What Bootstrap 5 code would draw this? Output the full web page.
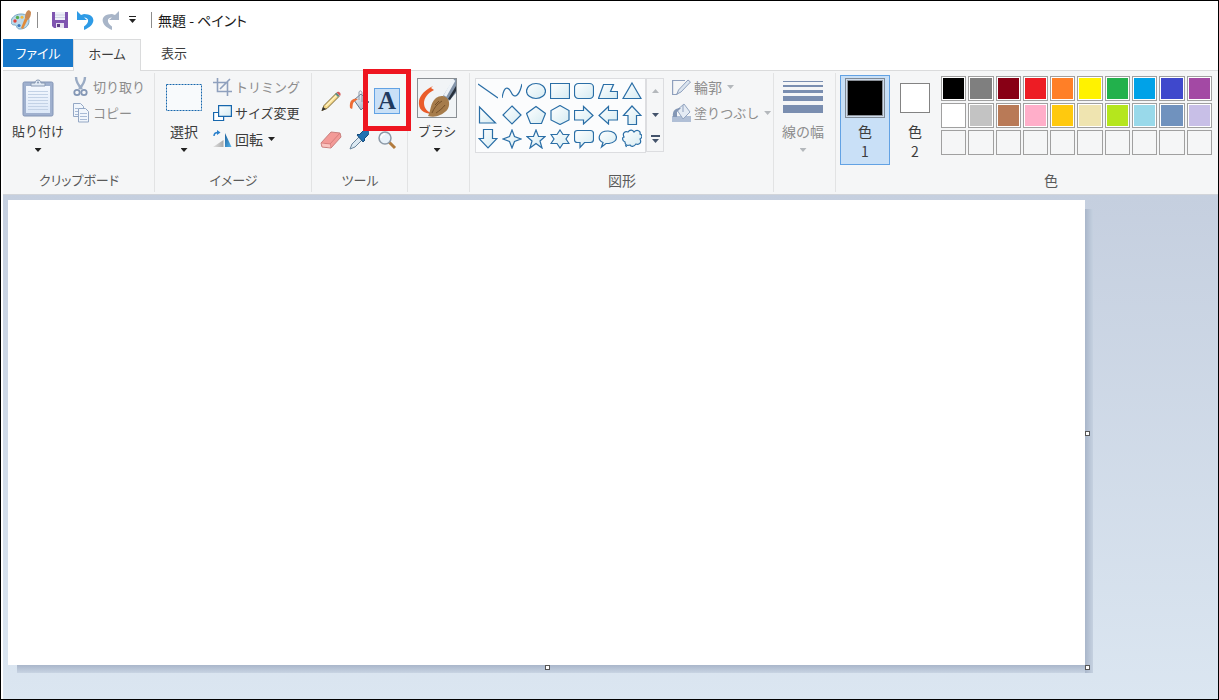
<!DOCTYPE html>
<html lang="ja">
<head>
<meta charset="utf-8">
<meta name="viewport" content="width=device-width, initial-scale=1">
<title>無題 - ペイント</title>
<link href="https://cdn.jsdelivr.net/npm/bootstrap@5.3.0/dist/css/bootstrap.min.css" rel="stylesheet">
<style>
  body { font-family: "Noto Sans CJK JP", sans-serif; font-size: 14px; line-height: 20px; font-feature-settings: "palt"; color: #3c3c3c; background: #fff; }
  svg { display: block; flex: none; }
  button { padding: 0; border: 0; background: none; color: inherit; white-space: nowrap; }
  .app-window { min-height: 100vh; border: 1px solid #000; padding-left: 2px; }
  .title-bar { height: 38px; padding: 0 8px; color: #1a1a1a; }
  .title-bar h1 { font-size: 14px; line-height: 20px; font-weight: 400; }
  .bar-line { width: 1px; height: 16px; background: #8c8c8c; margin: 0 6px 0 14px; }
  .bar-line.first { margin: 0 14px 0 6px; }
  .tab-strip { height: 31px; font-size: 13px; }
  .tab-strip a { display: block; height: 32px; padding-top: 4px; text-align: center; color: #3c3c3c; text-decoration: none; position: relative; }
  .tab-strip .tab-file { width: 70px; height: 28px; background: #1979ca; color: #fff; }
  .tab-strip .tab-home { width: 68px; background: #f5f6f7; border: 1px solid #dadbdc; border-bottom: 0; }
  .tab-strip .tab-view { width: 66px; }
  .ribbon { background: #f5f6f7; border-top: 1px solid #dadbdc; border-bottom: 1px solid #d2d5da; font-size: 13px; }
  .ribbon-group { position: relative; flex: none; display: flex; flex-direction: column; min-height: 123px; padding-top: 3px; }
  .ribbon-group:not(:last-child)::after { content: ""; position: absolute; right: 0; top: 2px; bottom: 2px; width: 1px; background: #e2e3e4; }
  .ribbon-group h2 { margin: auto 0 3px; font-size: 13px; line-height: 22px; font-weight: 400; text-align: center; color: #5a5a5a; }
  .ribbon .kanji { font-size: 14px; }
  .g-clip { width: 152px; } .g-image { width: 157px; } .g-tools { width: 96px; }
  .g-narrow { width: 62px; } .g-shapes { width: 304px; } .g-colors { flex: 1 0 382px; padding-top: 4px; }
  .g-clip > div { padding-left: 6px; }
  .g-colors h2 { padding-left: 48px; }
  .big-btn { display: flex; flex-direction: column; align-items: center; width: 58px; }
  .big-icon { display: flex; align-items: center; justify-content: center; height: 47px; }
  .big-caret { display: flex; align-items: center; height: 18px; }
  .row-btn { display: flex; align-items: center; height: 26px; gap: 3px; }
  .row-btn svg:first-child { width: 19px; }
  .dim { color: #8d8d8d; }
  .caret { width: 7px; height: 4px; background: currentColor; clip-path: polygon(0 0, 100% 0, 50% 100%); color: #222; }
  .row-btn .caret { margin-left: 2px; }
  .dim .caret { color: #b4b8bc; }
  .tool-grid { display: grid; grid-template-columns: repeat(3, 28px); grid-template-rows: 39px 39px; margin: 7px 0 0 5px; }
  .tool-grid button { display: flex; align-items: center; justify-content: center; }
  .text-tool { position: relative; }
  .text-tool > span { display: flex; align-items: center; justify-content: center; width: 26px; height: 26px; background: #c9e0f7; border: 1px solid #62a2e4; font: bold 25px/24px "Liberation Serif", serif; color: #1f3a5f; }
  .text-tool::after { content: ""; position: absolute; z-index: 2; left: -10px; top: -12px; width: 48px; height: 62px; border: 5px solid #ee1520; }
  .shape-box { width: 171px; height: 75px; margin: 4px 0 0 5px; background: #fbfcfd; border: 1px solid #dcdde0; display: grid; grid-template-columns: repeat(7, 24px); grid-template-rows: repeat(3, 24px); }
  .shape-box button { display: flex; align-items: center; justify-content: center; height: 23px; }
  .shape-box svg { fill: url(#shapeFill); stroke: #2a6ea6; stroke-width: 1.2; }
  .shape-scroll { width: 18px; height: 74px; margin-top: 4px; border: 1px solid #dcdde0; }
  .shape-scroll button { display: flex; align-items: center; justify-content: center; height: 24px; width: 100%; }
  .color-btn { width: 50px; height: 90px; border: 1px solid transparent; display: flex; flex-direction: column; align-items: center; font-size: 14px; }
  .color-btn.active { background: #c9e0f7; border-color: #62a2e4; }
  .color-btn .well { display: block; width: 30px; height: 30px; margin: 7px 0 8px; background: #fff; border: 1px solid #838383; }
  .color-btn.active .well { width: 40px; height: 40px; margin: 2px 0 3px; background: #000; border-color: #7f8a96; box-shadow: inset 0 0 0 1px #cfdcec, inset 0 0 0 2px #8b9199; }
  .palette { display: grid; grid-template-columns: repeat(10, 1fr); grid-auto-rows: 25px; gap: 2px; width: 271px; margin: 1px 0 0 1px; }
  .palette button { border: 1px solid #a0a0a0; }
  .palette .filled { box-shadow: inset 0 0 0 1px #fff; }
  .workspace { background: linear-gradient(#c5cfdf, #dbe6f1); padding: 5px 133px 34px 5px; }
  .canvas { position: relative; background: #fff; }
  .canvas::before { content: ""; position: absolute; left: 100%; top: 9px; bottom: -8px; width: 8px; background: linear-gradient(90deg, #a9b6ca, #c5d1e0); }
  .canvas::after { content: ""; position: absolute; top: 100%; left: 9px; right: 0; height: 8px; background: linear-gradient(#a9b6ca, #c8d4e3); }
  .handle { position: absolute; z-index: 1; width: 5px; height: 5px; background: #fff; border: 1px solid #555; }
  .handle-e { left: 100%; top: 50%; margin-top: -2px; } .handle-s { top: 100%; left: 50%; margin-left: -2px; } .handle-se { left: 100%; top: 100%; }
</style>
</head>
<body>
<svg class="position-absolute" width="0" height="0" aria-hidden="true"><defs>
  <linearGradient id="shapeFill" x2="1" y2="1"><stop stop-color="#fff"/><stop offset="1" stop-color="#d5ebf2"/></linearGradient>
  <linearGradient id="paper" x2="0" y2="1"><stop stop-color="#f4f8fe"/><stop offset="1" stop-color="#dce8f8"/></linearGradient>
  <linearGradient id="metal" x2="1" y2="1"><stop stop-color="#fff"/><stop offset="1" stop-color="#8ba0b8"/></linearGradient>
  <linearGradient id="grayTri" x2="1" y2="0"><stop stop-color="#e2e2e2"/><stop offset="1" stop-color="#a9a9a9"/></linearGradient>
  <linearGradient id="blueTri" x2="1" y2="1"><stop stop-color="#1c5f9c"/><stop offset="1" stop-color="#55b4ea"/></linearGradient>
</defs></svg>

<div class="app-window d-flex flex-column">
  <header class="title-bar d-flex align-items-center">
    <svg width="20" height="20" viewBox="0 0 20 20"><path d="M10 4C4 4 0 8 0 12c0 3 3 3 4 3 2 0 1 4 5 4 6 0 9-4 9-8 0-5-3-7-8-7z" fill="#b9d9ec" stroke="#79a6c2"/><circle cx="4" cy="11" r="1.700" fill="#e0443a"/><circle cx="6.500" cy="7.500" r="1.700" fill="#5aad4e"/><circle cx="11" cy="7.300" r="1.500" fill="#f1b93a"/><circle cx="8" cy="15.500" r="1.600" fill="#3f78b9"/><path d="m10 18 4-10 3 1-5 10z" fill="#e08b3c"/><path d="M14 8c0-4 1-7 4-8l2 2c0 4-1 6-3 8z" fill="#c98a55"/></svg>
    <span class="bar-line first"></span>
    <button aria-label="上書き保存"><svg width="16" height="16" viewBox="0 0 16 16"><path d="M0 0h16v16H2l-2-2z" fill="#7f55b0"/><path d="M3 0h10v8H3z" fill="#eef0f8"/><path d="M3 3h10M3 5.500h10" stroke="#cdd2e4"/><path d="M4 11h8v5H4z" fill="#e6e2f0"/><path d="M5 12h3v3H5z" fill="#5d3f86"/></svg></button>
    <button class="ms-2" aria-label="元に戻す"><svg width="18" height="19" viewBox="0 0 18 19"><path d="M1 0v9h10L8 6.500c5 0 6 5 0 9V19c13-5 12-16 0-16L5 4z" fill="#2e9be6"/></svg></button>
    <button class="ms-2" aria-label="やり直し"><svg width="18" height="19" viewBox="0 0 18 19"><path d="M17 0v9H7l3-2.500c-5 0-6 5 0 9V19C-3 14-2 3 10 3l3 1z" fill="#a8b5c8"/></svg></button>
    <button class="ms-2" aria-label="クイック アクセスのカスタマイズ"><svg width="9" height="8" viewBox="0 0 9 8"><path d="M1 0h7v1H1zM1 3h7L4.500 7z" fill="#222"/></svg></button>
    <span class="bar-line"></span>
    <h1 class="m-0">無題 - ペイント</h1>
  </header>

  <nav class="tab-strip d-flex">
    <a href="#" class="tab-file">ファイル</a>
    <a href="#" class="tab-home">ホーム</a>
    <a href="#" class="tab-view">表示</a>
  </nav>

  <div class="ribbon d-flex">
    <section class="ribbon-group g-clip">
      <div class="d-flex">
        <button class="big-btn">
          <span class="big-icon"><svg width="32" height="38" viewBox="0 0 32 38"><rect x="1" y="3" width="30" height="34" rx="1.500" fill="#9fb0ce" stroke="#8395b6"/><path d="M4 7h24v27H4z" fill="url(#paper)"/><path d="M6 12.500h20M6 15.500h20M6 18.500h20M6 21.500h20M6 24.500h20M6 27.500h20M6 30.500h20" stroke="#c3d2e6"/><path d="M9 7V4h4c0-4 6-4 6 0h4v3z" fill="#dfe8f3" stroke="#8798b2"/><circle cx="16" cy="3.500" r="1" fill="#8798b2"/></svg></span>
          <span>貼り付け</span><span class="big-caret"><i class="caret"></i></span>
        </button>
        <div class="ps-1 dim">
          <button class="row-btn"><svg width="19" height="20" viewBox="0 0 19 20"><path d="M5 0c0 5 2 8 6 12M14 0c0 5-2 8-6 12" stroke="#9aabc4" stroke-width="2.400" fill="none"/><circle cx="6" cy="15.500" r="2.700" fill="none" stroke="#8497b5" stroke-width="1.800"/><circle cx="13" cy="15.500" r="2.700" fill="none" stroke="#8497b5" stroke-width="1.800"/></svg>切り取り</button>
          <button class="row-btn"><svg width="19" height="20" viewBox="0 0 19 20"><g fill="#f1f6fc" stroke="#95a8c5"><path d="M2.500.5h7l3 3v10h-10z"/><path d="M7.500 5.500h7l3 3v10.500h-10z"/></g><path d="M4 5.500h3M4 8.500h3M4 11.500h3M9 10.500h7M9 13.500h7M9 16.500h7" stroke="#a9bbd6"/></svg>コピー</button>
        </div>
      </div>
      <h2>クリップボード</h2>
    </section>

    <section class="ribbon-group g-image">
      <div class="d-flex">
        <button class="big-btn">
          <span class="big-icon"><svg width="36" height="27" viewBox="0 0 36 27"><rect x=".5" y=".5" width="35" height="26" fill="#f8fafc" stroke="#1767ad" stroke-dasharray="2 1"/></svg></span>
          <span class="kanji">選択</span><span class="big-caret"><i class="caret"></i></span>
        </button>
        <div>
          <button class="row-btn dim"><svg width="19" height="18" viewBox="0 0 19 18"><path d="M4.500 0v13.500H19M0 4.500h14.500V18M7 11 17 1" fill="none" stroke="#8fa0bd" stroke-width="1.600"/></svg>トリミング</button>
          <button class="row-btn"><svg width="19" height="16" viewBox="0 0 19 16"><path d="M.6 7.500h10v8H.6z" fill="#fff" stroke="#1767ad" stroke-width="1.200"/><path d="M5.600.6h12.800v10.800H5.600z" fill="url(#shapeFill)" stroke="#1767ad" stroke-width="1.200"/></svg>サイズ変更</button>
          <button class="row-btn"><svg width="19" height="18" viewBox="0 0 19 18"><path d="M0 17h10.500v-7z" fill="url(#grayTri)"/><path d="M12 3v14h6.500z" fill="url(#blueTri)"/><path d="M1 6c0-3 2-3.500 4-3.500" stroke="#2a80cc" stroke-width="1.500" fill="none"/><path d="M4 0v5l3.500-2.500z" fill="#2a80cc"/></svg><span class="kanji">回転</span><i class="caret"></i></button>
        </div>
      </div>
      <h2>イメージ</h2>
    </section>

    <section class="ribbon-group g-tools">
      <div class="tool-grid">
        <button aria-label="鉛筆"><svg width="21" height="22" viewBox="0 0 21 22"><path d="M1 20.500 3 15.500 15 3.500l3 3L6 18.500z" fill="#f6d98a" stroke="#7d6a3a"/><path d="M5 16 16 5" stroke="#fff3c4" stroke-width="1.200"/><path d="m.5 21 1.500-4L5 19z" fill="#333"/><path d="m14 4 1.500-1.500 3 3L17 7z" fill="#5d8f86"/><path d="M15.500 2.500c2-2 5.500 1 3.500 3.500z" fill="#d75958"/></svg></button>
        <button aria-label="塗りつぶし"><svg width="20" height="22" viewBox="0 0 20 22"><path d="M5 10 12 4l8 8-8 8z" fill="url(#metal)" stroke="#60758e"/><path d="M10 10V2c1-2 3-1 3 1v9" fill="none" stroke="#8c99a8"/><path d="M1 18C0 10 4 8 9 9l-4 3c-2 2-1 6-2 7z" fill="#ee6c35"/></svg></button>
        <button class="text-tool" aria-label="テキスト"><span>A</span></button>
        <button aria-label="消しゴム"><svg width="22" height="20" viewBox="0 0 22 20"><path d="M1 13 11 2l9 1 1 4-10 11-9-1z" fill="#f39a97" stroke="#c9807e"/><path d="m1 13 9 1L20 3M10 14l1 4" fill="none" stroke="#d87f7d"/><path d="m1.500 13.500 8.500 1 .5 3-8-1z" fill="#f9c5c1"/></svg></button>
        <button aria-label="色の選択"><svg width="20" height="22" viewBox="0 0 20 22"><path d="m1 20 2-5 8-8 3 3-8 8z" fill="#dce9f2" stroke="#69859c"/><path d="m8 6 6 7 2-2-1-1 4-4c3-3-2-7-5-4l-4 4-1-1z" fill="#2371b1" stroke="#164c7d"/></svg></button>
        <button aria-label="拡大鏡"><svg width="20" height="20" viewBox="0 0 20 20"><path d="m12 12 6 6" stroke="#b27b3d" stroke-width="3"/><circle cx="8" cy="8" r="6" fill="#e8f2fa" stroke="#8d9aa8" stroke-width="1.500"/><path d="M4 8c0-2 2-4 4-4" stroke="#fff" stroke-width="1.500" fill="none"/></svg></button>
      </div>
      <h2>ツール</h2>
    </section>

    <section class="ribbon-group g-narrow">
      <button class="big-btn">
        <span class="big-icon"><svg width="40" height="40" viewBox="0 0 40 40"><rect x=".5" y=".5" width="39" height="39" fill="#f1f4f6" stroke="#8a8f94"/><path d="M16 8C8 12 3 17 2 23c-1 8 4 13 14 13-5-2-9-5-9-11 0-5 4-10 10-13l-3-2 2-2z" fill="#ea5c2a"/><path d="M26 18 37 1h2v14l-7 8z" fill="#8394a9"/><path d="m28 18 9-16" stroke="#eef3f8" stroke-width="3"/><path d="m33 22 6-9V8l-8 13z" fill="#27303c"/><path d="M11 38c3-5 2-13 8-18 5-4 12-2 13 4 1 7-4 11-9 13-4 2-8 2-12 1z" fill="#a67c4b"/><path d="M15 35c2-5 5-9 10-12M19 35c3-2 7-5 9-8M18 27l4-4" stroke="#765129" fill="none"/></svg></span>
        <span>ブラシ</span><span class="big-caret"><i class="caret"></i></span>
      </button>
    </section>

    <section class="ribbon-group g-shapes">
      <div class="d-flex align-items-start">
        <div class="shape-box" id="shapes"></div>
        <div class="shape-scroll">
          <button aria-label="上へ"><svg width="7" height="4" viewBox="0 0 7 4"><path d="M0 4h7L3.500 0z" fill="#b4b8bc"/></svg></button>
          <button aria-label="下へ"><svg width="7" height="4" viewBox="0 0 7 4"><path d="M0 0h7L3.500 4z" fill="#43536b"/></svg></button>
          <button aria-label="その他"><svg width="9" height="8" viewBox="0 0 9 8"><path d="M0 0h9v2H0zM1 4h7L4.500 8z" fill="#43536b"/></svg></button>
        </div>
        <div class="dim ps-1">
          <button class="row-btn ms-1"><svg width="19" height="18" viewBox="0 0 19 18"><path d="M13 2.500H.6v14h4L15 6" fill="none" stroke="#8fa0bd" stroke-width="1.200"/><path d="m5 16 1.500-4L16 2l2.500 2L9 14z" fill="#dbe5f0" stroke="#8fa0bd"/></svg><span class="kanji">輪郭</span><i class="caret"></i></button>
          <button class="row-btn ms-1"><svg width="19" height="20" viewBox="0 0 19 20"><path d="M0 13h19v6H0z" fill="#b0bfd6"/><path d="m5 7 7-6 6 8-7 7z" fill="#e4ebf4" stroke="#93a5c0"/><path d="M1 14C0 7 4 5 9 5L5 9v5z" fill="#8497b5"/><path d="M11 9V2" stroke="#8fa0bd"/></svg>塗りつぶし<i class="caret"></i></button>
        </div>
      </div>
      <h2 class="kanji">図形</h2>
    </section>

    <section class="ribbon-group g-narrow">
      <button class="big-btn dim">
        <span class="big-icon"><svg width="40" height="34" viewBox="0 0 40 34"><path d="M0 0h40v1H0zM0 4h40v2H0zM0 9h40v3H0zM0 15h40v5H0zM0 24h40v8H0z" fill="#7a8eb0"/></svg></span>
        <span class="kanji">線の幅</span><span class="big-caret"><i class="caret"></i></span>
      </button>
    </section>

    <section class="ribbon-group g-colors">
      <div class="d-flex ps-1">
        <button class="color-btn active"><span class="well"></span><span>色<br>1</span></button>
        <button class="color-btn"><span class="well"></span><span>色<br>2</span></button>
        <div class="palette" id="palette"></div>
      </div>
      <h2 class="kanji">色</h2>
    </section>
  </div>

  <main class="workspace flex-grow-1 d-flex">
    <div class="canvas flex-grow-1"><span class="handle handle-e"></span><span class="handle handle-s"></span><span class="handle handle-se"></span></div>
  </main>
</div>

<script>
  const shapes = [
    ['直線', '<path d="M0 3 20 17"/>'],
    ['曲線', '<path fill="none" d="M0 17C2 5 6 5 9 11c3 7 8 5 11-8"/>'],
    ['楕円', '<ellipse cx="10" cy="10" rx="9.500" ry="7.500"/>'],
    ['四角形', '<path d="M.5 2.500h19v15H.5z"/>'],
    ['角丸四角形', '<rect x=".5" y="2.500" width="19" height="15" rx="4"/>'],
    ['多角形', '<path d="M5.500 3.500h10l-3 7h7v7H.5z"/>'],
    ['三角形', '<path d="M10 2 19 17.500H1z"/>'],
    ['直角三角形', '<path d="M1.500 2v16h16z"/>'],
    ['ひし形', '<path d="m10 1 9 9-9 9-9-9z"/>'],
    ['五角形', '<path d="m10 1.500 9.500 7-4 10h-11l-4-10z"/>'],
    ['六角形', '<path d="m10 .5 9 5v9.500l-9 4.500-9-4.500V5.500z"/>'],
    ['右矢印', '<path d="M.5 5.500h9v-4l9.500 9-9.500 8.500v-4h-9z"/>'],
    ['左矢印', '<path d="M19.500 5.500h-9v-4l-9.500 9 9.500 8.500v-4h9z"/>'],
    ['上矢印', '<path d="M6 19.500v-9H1.500L10 1l9 9.500h-4.500v9z"/>'],
    ['下矢印', '<path d="M5.500.5h9v9H19L10 19 1 9.500h4.500z"/>'],
    ['四方星', '<path d="m10 1 2.500 6.500L19 10l-6.500 2.500L10 19l-2.500-6.500L1 10l6.500-2.500z"/>'],
    ['五方星', '<path d="m10 1 2.500 6.500H19l-5 4.500 2 7-6-4.500L4 19l2-7-5-4.500h6.500z"/>'],
    ['六方星', '<path d="m10 1 3 4.500h6L16 10l3 4.500h-6L10 19l-3-4.500H1L4 10 1 5.500h6z"/>'],
    ['角丸吹き出し', '<path d="M3.500 1.500h13q3 0 3 3v6q0 3-3 3h-6L6 18.500v-5H3.500q-3 0-3-3v-6q0-3 3-3z"/>'],
    ['円形吹き出し', '<path d="M5 13.500C-1 11 0 2 10 2s12 11 1 12.500H8L3.500 18z"/>'],
    ['雲形吹き出し', '<path d="M3 13C0 12 0 8 2 8 0 4 3 2 6 3c2-3 5-2 6 0 3-3 7-1 6 2 3 1 2 4 0 5 2 4-1 6-4 5-2 3-5 3-6 1-3 1-5 0-5-3z"/><path d="m3.500 16 1 2"/>']
  ];
  document.getElementById('shapes').innerHTML = shapes.map(([name, art]) =>
    `<button aria-label="${name}"><svg width="20" height="20" viewBox="0 0 20 20">${art}</svg></button>`).join('');

  const colors = ['#000000','#7f7f7f','#880015','#ed1c24','#ff7f27','#fff200','#22b14c','#00a2e8','#3f48cc','#a349a4',
                  '#ffffff','#c3c3c3','#b97a57','#ffaec9','#ffc90e','#efe4b0','#b5e61d','#99d9ea','#7092be','#c8bfe7'];
  document.getElementById('palette').innerHTML = Array.from({ length: 30 }, (_, i) => colors[i]
    ? `<button class="filled" aria-label="${colors[i]}" style="background-color:${colors[i]}"></button>`
    : '<button aria-label="空き"></button>').join('');
</script>
</body>
</html>
